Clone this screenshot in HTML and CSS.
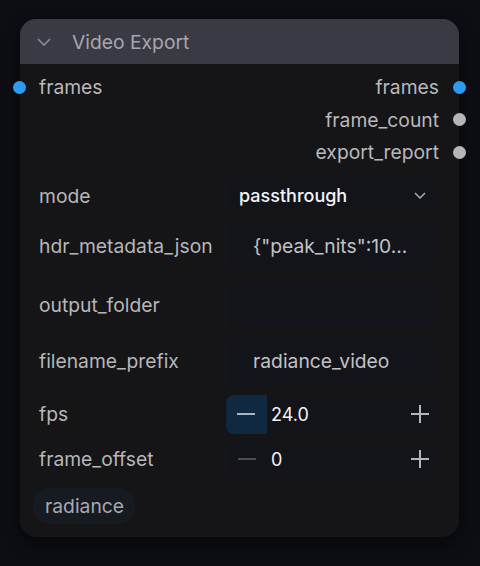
FILE: index.html
```html
<!DOCTYPE html>
<html>
<head>
<meta charset="utf-8">
<link rel="stylesheet" href="styles.css">
</head>
<body>
<div class="node">
  <div class="header">
    <svg class="hchev" width="14" height="8" viewBox="0 0 14 8"><path d="M1 1 L7 7 L13 1" fill="none" stroke="#8b8b95" stroke-width="1.6"/></svg>
    <span class="title">Video Export</span>
  </div>
  <div class="slots">
    <div class="slot-row">
      <span class="dot in blue"></span>
      <span class="slot-l">frames</span>
      <span class="slot-r">frames</span>
      <span class="dot out blue"></span>
    </div>
    <div class="slot-row">
      <span class="slot-r">frame_count</span>
      <span class="dot out grey"></span>
    </div>
    <div class="slot-row">
      <span class="slot-r">export_report</span>
      <span class="dot out grey"></span>
    </div>
  </div>
  <div class="row r-mode">
    <span class="label">mode</span>
    <div class="widget combo">
      <span class="combo-val">passthrough</span>
      <svg width="12" height="7" viewBox="0 0 12 7"><path d="M1 1 L6 6 L11 1" fill="none" stroke="#a9a9b0" stroke-width="1.5"/></svg>
    </div>
  </div>
  <div class="row r-hdr">
    <span class="label">hdr_metadata_json</span>
    <div class="widget text"><span class="text-val">{"peak_nits":10...</span></div>
  </div>
  <div class="row r-out">
    <span class="label">output_folder</span>
    <div class="widget text"></div>
  </div>
  <div class="row r-file">
    <span class="label">filename_prefix</span>
    <div class="widget text"><span class="text-val">radiance_video</span></div>
  </div>
  <div class="row r-fps">
    <span class="label">fps</span>
    <div class="widget num">
      <div class="btn minus active"><span class="bar"></span></div>
      <span class="num-val">24.0</span>
      <div class="btn plus"><span class="bar"></span><span class="bar v"></span></div>
    </div>
  </div>
  <div class="row r-off">
    <span class="label">frame_offset</span>
    <div class="widget num">
      <div class="btn minus dim"><span class="bar"></span></div>
      <span class="num-val">0</span>
      <div class="btn plus"><span class="bar"></span><span class="bar v"></span></div>
    </div>
  </div>
  <div class="tag-row">
    <span class="tag">radiance</span>
  </div>
</div>
</body>
</html>
```
FILE: styles.css
```css
html, body {
  margin: 0;
  padding: 0;
  background: #0c0e14;
  width: 480px;
  height: 566px;
  overflow: hidden;
  font-family: Inter, "Noto Sans", sans-serif;
}
body {
  padding-top: 19px;
  box-sizing: border-box;
}
.node {
  margin-left: 20px;
  width: 439px;
  height: 518px;
  background: #151417;
  border-radius: 16px;
  box-shadow: 0 6px 18px rgba(0,0,0,0.55);
  position: relative;
  box-sizing: border-box;
}
.header {
  height: 45px;
  background: #3a3a44;
  border-radius: 16px 16px 0 0;
  display: flex;
  align-items: center;
  padding-left: 17px;
}
.hchev { margin-right: 21px; margin-top: 1px; }
.title {
  color: #a6a6ae;
  font-size: 19.3px;
}
.slots {
  padding-top: 7px;
  display: flex;
  flex-direction: column;
}
.slot-row {
  height: 32.5px;
  display: flex;
  align-items: center;
  position: relative;
  font-size: 19.3px;
  color: #b9b9bc;
}
.slot-l { margin-left: 19px; }
.slot-r { margin-left: auto; margin-right: 20px; }
.dot {
  position: absolute;
  width: 13px;
  height: 13px;
  border-radius: 50%;
  top: 50%;
  margin-top: -6.5px;
}
.dot.in { left: -7px; }
.dot.out { right: -7px; }
.blue { background: #2d9cf0; }
.grey { background: #b5b5b8; }
.row {
  display: flex;
  align-items: center;
  padding-left: 19px;
  padding-right: 21px;
  font-size: 19.3px;
}
.label {
  color: #b7b7ba;
  flex: 1;
}
.widget {
  width: 210px;
  height: 100%;
  background: #121419;
  border-radius: 8px;
  display: flex;
  align-items: center;
  box-sizing: border-box;
}
.r-mode { margin-top: 9px; height: 36px; }
.r-hdr { margin-top: 7px; height: 50px; }
.r-out { margin-top: 10px; height: 48px; }
.r-file { margin-top: 8px; height: 49px; }
.r-fps { margin-top: 9px; height: 39px; }
.r-off { margin-top: 7px; height: 37px; }
.combo {
  padding-left: 11px;
  padding-right: 12px;
  justify-content: space-between;
}
.combo-val {
  color: #f4f4f6;
  font-weight: 500;
  font-size: 18px;
}
.text { padding-left: 25px; }
.text-val { color: #c2c2c5; }
.num {
  padding-right: 2px;
}
.r-fps .num { margin-left: -2px; width: 212px; }
.btn {
  width: 41px;
  height: 100%;
  position: relative;
  flex: none;
}
.btn.active {
  background: #0f2a40;
  border-radius: 8px 0 0 8px;
}
.bar {
  position: absolute;
  left: 50%;
  top: 50%;
  width: 18px;
  height: 2px;
  margin-left: -9px;
  margin-top: -1px;
  background: #b3b6bb;
}
.minus.active .bar { margin-left: -10px; background: #a9b4bf; }
.minus.dim .bar { background: #4a4c52; margin-left: -11px; }
.bar.v {
  width: 2px;
  height: 18px;
  margin-left: -1px;
  margin-top: -9px;
}
.plus { width: 32px; margin-left: auto; }
.num-val {
  color: #f2f2f4;
  margin-left: 4px;
  font-size: 18px;
}
.r-off .num-val { margin-left: 2px; }
.tag-row {
  margin-top: 10px;
  padding-left: 13px;
  display: flex;
}
.tag {
  height: 36px;
  line-height: 36px;
  padding: 0 11px 0 12px;
  background: #161a21;
  border-radius: 16px;
  color: #a8a9ad;
  font-size: 19.3px;
}
```
